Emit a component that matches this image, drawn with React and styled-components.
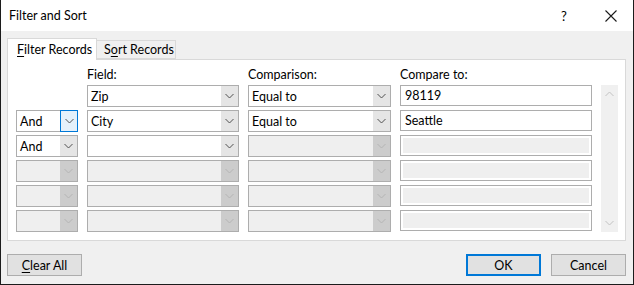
import React from "react";
import styled, { createGlobalStyle } from "styled-components";

const FONT = `Lato, "Noto Sans", Arial, sans-serif`;

const GlobalStyle = createGlobalStyle`
  html, body {
    margin: 0;
    padding: 0;
    background: #ffffff;
  }
  * {
    box-sizing: border-box;
  }
`;

const rows = [
  { and: null, field: "Zip", comparison: "Equal to", value: "98119" },
  { and: "And", focused: true, field: "City", comparison: "Equal to", value: "Seattle" },
  { and: "And", field: "", comparisonDisabled: true, valueDisabled: true },
  { andDisabled: true, fieldDisabled: true, comparisonDisabled: true, valueDisabled: true },
  { andDisabled: true, fieldDisabled: true, comparisonDisabled: true, valueDisabled: true },
  { andDisabled: true, fieldDisabled: true, comparisonDisabled: true, valueDisabled: true },
];

const Chevron = ({ color, up }) => (
  <svg width="9" height="6" viewBox="0 0 9 6">
    <path
      d={up ? "M0.5 5 L4.5 1 L8.5 5" : "M0.5 1 L4.5 5 L8.5 1"}
      fill="none"
      stroke={color}
      strokeWidth="1"
    />
  </svg>
);

const Combo = ({ value, disabled, focused }) => (
  <StyledCombo $disabled={disabled}>
    <StyledComboValue>{value}</StyledComboValue>
    <StyledComboButton $disabled={disabled} $focused={focused}>
      <Chevron color={disabled ? "#b4b4b4" : "#505050"} />
    </StyledComboButton>
  </StyledCombo>
);

export const App = () => {
  return (
    <>
      <GlobalStyle />
      <StyledWindow>
        <StyledTitleBar>
          <StyledTitle>Filter and Sort</StyledTitle>
          <StyledHelp>?</StyledHelp>
          <StyledClose>
            <svg width="12" height="12" viewBox="0 0 12 12">
              <path d="M0.5 0.5 L11.5 11.5 M11.5 0.5 L0.5 11.5" stroke="#1a1a1a" strokeWidth="1.1" />
            </svg>
          </StyledClose>
        </StyledTitleBar>
        <StyledBody>
          <StyledTabs>
            <StyledTab $active>
              <u>F</u>ilter Records
            </StyledTab>
            <StyledTab>
              S<u>o</u>rt Records
            </StyledTab>
          </StyledTabs>
          <StyledPanel>
            <StyledGrid>
              <span />
              <StyledLabel>Field:</StyledLabel>
              <StyledLabel>Comparison:</StyledLabel>
              <StyledLabel>Compare to:</StyledLabel>
              <span />
              {rows.map((row, i) => (
                <React.Fragment key={i}>
                  {row.and || row.andDisabled ? (
                    <Combo value={row.and} disabled={row.andDisabled} focused={row.focused} />
                  ) : (
                    <span />
                  )}
                  <Combo value={row.field} disabled={row.fieldDisabled} />
                  <Combo value={row.comparison} disabled={row.comparisonDisabled} />
                  <StyledTextBox $disabled={row.valueDisabled}>{row.value}</StyledTextBox>
                  {i === 0 && (
                    <StyledScrollbar>
                      <Chevron color="#c2c2c2" up />
                      <Chevron color="#c2c2c2" />
                    </StyledScrollbar>
                  )}
                </React.Fragment>
              ))}
            </StyledGrid>
          </StyledPanel>
          <StyledFooter>
            <StyledButton>
              <u>C</u>lear All
            </StyledButton>
            <StyledSpacer />
            <StyledButton $default>OK</StyledButton>
            <StyledButton>Cancel</StyledButton>
          </StyledFooter>
        </StyledBody>
      </StyledWindow>
    </>
  );
};

export default App;

const StyledWindow = styled.div`
  width: 634px;
  height: 285px;
  display: flex;
  flex-direction: column;
  border-left: 1px solid #1c1c1c;
  border-right: 1px solid #1c1c1c;
  border-bottom: 1px solid #1c1c1c;
  font-family: ${FONT};
  font-size: 12.5px;
  color: #000000;
`;

const StyledTitleBar = styled.div`
  height: 31px;
  flex-shrink: 0;
  display: flex;
  align-items: center;
  padding-left: 8px;
  background: #ffffff;
`;

const StyledTitle = styled.div`
  flex: 1;
  margin-top: 0;
`;

const StyledHelp = styled.div`
  width: 14px;
  font-size: 13px;
  margin-right: 34px;
  text-align: center;
`;

const StyledClose = styled.div`
  display: flex;
  align-items: center;
  margin-right: 16px;
`;

const StyledBody = styled.div`
  flex: 1;
  display: flex;
  flex-direction: column;
  background: #f0f0f0;
  padding: 7px 7px 0 6px;
`;

const StyledTabs = styled.div`
  display: flex;
  align-items: flex-end;
  height: 21px;
  position: relative;
  z-index: 1;
`;

const StyledTab = styled.div`
  display: flex;
  align-items: center;
  width: ${(p) => (p.$active ? "90px" : "79px")};
  height: ${(p) => (p.$active ? "22px" : "19px")};
  margin-bottom: ${(p) => (p.$active ? "-1px" : "0")};
  padding: ${(p) => (p.$active ? "0 0 1px 9px" : "0 0 0 7px")};
  background: ${(p) => (p.$active ? "#ffffff" : "#f0f0f0")};
  border: 1px solid #d9d9d9;
  border-bottom: ${(p) => (p.$active ? "none" : "1px solid #d9d9d9")};
  border-left: ${(p) => (p.$active ? "1px solid #d9d9d9" : "none")};
  white-space: nowrap;

  u {
    text-underline-offset: 2px;
  }
`;

const StyledPanel = styled.div`
  height: 182px;
  background: #ffffff;
  border: 1px solid #d9d9d9;
  padding: 8px 6px 0 8px;
`;

const StyledGrid = styled.div`
  display: grid;
  grid-template-columns: 62px 152px 143px 192px 17px;
  grid-template-rows: 14px repeat(6, 22px);
  column-gap: 9px;
  row-gap: 3px;
`;

const StyledLabel = styled.div`
  line-height: 16px;
  white-space: nowrap;
  align-self: center;
`;

const StyledCombo = styled.div`
  display: flex;
  height: 22px;
  border: 1px solid #adadad;
  background: ${(p) => (p.$disabled ? "#efefef" : "#ffffff")};
`;

const StyledComboValue = styled.div`
  flex: 1;
  display: flex;
  align-items: center;
  padding-left: 3px;
  white-space: nowrap;
  overflow: hidden;
`;

const StyledComboButton = styled.div`
  display: flex;
  align-items: center;
  justify-content: center;
  background: ${(p) => (p.$focused ? "#e5f1fb" : p.$disabled ? "#cccccc" : "#e5e5e5")};
  margin: ${(p) => (p.$focused ? "-1px -1px -1px 0" : "0")};
  width: ${(p) => (p.$focused ? "18px" : "17px")};
  border: ${(p) => (p.$focused ? "1px solid #0078d7" : "none")};
`;

const StyledTextBox = styled.div`
  height: 21px;
  display: flex;
  align-items: center;
  padding-left: 4px;
  border: 1px solid #adadad;
  background: ${(p) => (p.$disabled ? "#efefef" : "#ffffff")};
  box-shadow: ${(p) => (p.$disabled ? "inset 0 0 0 2px #ffffff" : "none")};
`;

const StyledScrollbar = styled.div`
  grid-column: 5;
  grid-row: 2 / span 6;
  background: #f0f0f0;
  display: flex;
  flex-direction: column;
  justify-content: space-between;
  align-items: center;
  padding: 6px 0 6px;
`;

const StyledFooter = styled.div`
  display: flex;
  gap: 10px;
  margin-top: 13px;
`;

const StyledSpacer = styled.div`
  flex: 1;
`;

const StyledButton = styled.div`
  width: 75px;
  height: 22px;
  display: flex;
  align-items: center;
  justify-content: center;
  background: #e1e1e1;
  border: ${(p) => (p.$default ? "2px solid #0078d7" : "1px solid #adadad")};

  u {
    text-underline-offset: 2px;
  }
`;
